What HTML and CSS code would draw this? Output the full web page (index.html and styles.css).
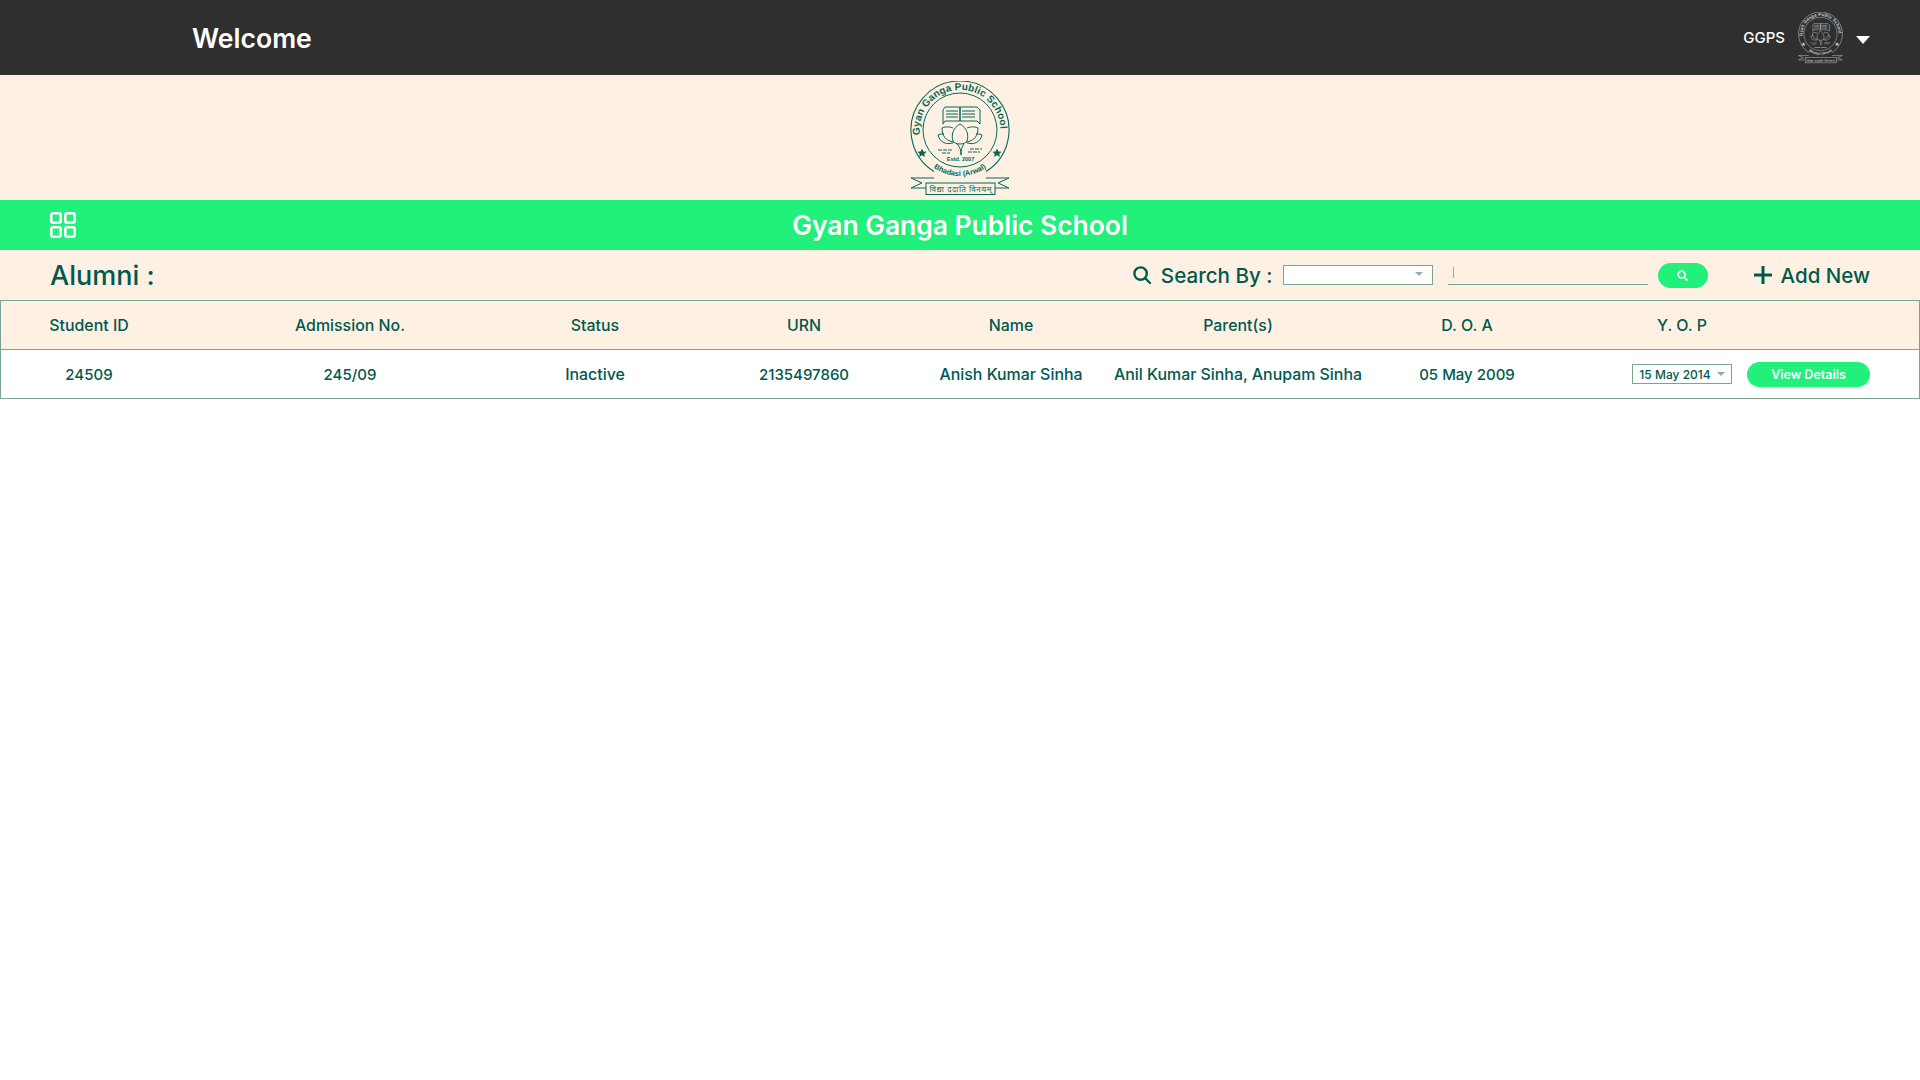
FILE: index.html
```html
<!DOCTYPE html>
<html lang="en">
<head>
<meta charset="utf-8">
<title>Alumni</title>
<link rel="stylesheet" href="styles.css">
</head>
<body>
<svg class="defs" width="0" height="0" aria-hidden="true">
  <defs>
    <path id="arcTop" d="M 10 55 A 40.4 40.4 0 1 1 90 55"/>
    <path id="arcBot" d="M 16 80 A 46 46 0 0 0 84 80"/>
    <symbol id="crest" viewBox="0 0 100 116">
      <g fill="none" stroke="currentColor" stroke-width="1">
        <path d="M 24 90.5 A 49 49 0 1 1 76 90.5" stroke-width="1.1"/>
        <circle cx="50" cy="49" r="37"/>
        <path d="M33 29 l2 -3 h15 v14 h-15 l-2 3z M50 26 h17 l3 3 v14 l-3 -3 h-17z M36 30 h12 M36 33 h12 M36 36 h12 M52 30 h13 M52 33 h13 M52 36 h13"/>
        <path d="M50 43 c-7 4 -9 11 -7 17 c2 4 12 4 14 0 c2 -6 0 -13 -7 -17z M43 47 c-5 -2 -9 -1 -11 0 c0 7 3 13 12 14 M57 47 c5 -2 9 -1 11 0 c0 7 -3 13 -12 14 M34 53 c-3 0 -5 0 -6 1 c2 7 7 10 15 8 M66 53 c3 0 5 0 6 1 c-2 7 -7 10 -15 8"/>
        <path d="M47 63 c3 3 4 6 4 11 M54 63 c-2 2 -3 6 -3 11"/>
        <path d="M28 69 h14 M32 72 h8 M60 68 h12 M58 71 h12" stroke-dasharray="4 1"/>
        <path d="M24 97 H1 L12 102 L1 107 H16 M76 97 H99 L88 102 L99 107 H85"/>
        <rect x="16" y="102" width="69" height="11.5" fill="var(--crest-fill)"/>
      </g>
      <g fill="currentColor" stroke="none" font-family="'Liberation Sans', sans-serif">
        <path d="M12 67.5 l1.4 3 3.2 .3 -2.4 2.1 .8 3.1 -3 -1.7 -3 1.7 .8 -3.1 -2.4 -2.1 3.2 -.3z"/>
        <path d="M87 67.5 l1.4 3 3.2 .3 -2.4 2.1 .8 3.1 -3 -1.7 -3 1.7 .8 -3.1 -2.4 -2.1 3.2 -.3z"/>
        <text font-size="10" font-weight="700"><textPath href="#arcTop" startOffset="1" textLength="130" lengthAdjust="spacing">Gyan Ganga Public School</textPath></text>
        <text font-size="5.6" font-weight="700" x="50.5" y="80" text-anchor="middle">Estd. 2007</text>
        <text font-size="7.4" font-weight="700"><textPath href="#arcBot" startOffset="50%" text-anchor="middle">Bhadasi (Arwal)</textPath></text>
        <text font-size="8" x="50.5" y="110.5" text-anchor="middle" textLength="62" font-family="'Noto Sans', 'DejaVu Sans', sans-serif">विद्या ददाति विनयम्</text>
      </g>
    </symbol>
  </defs>
</svg>

<header class="topbar">
  <h1 class="welcome">Welcome</h1>
  <div class="user">
    <span class="user-name">GGPS</span>
    <svg class="crest-small"><use href="#crest"/></svg>
    <span class="caret-white"></span>
  </div>
</header>

<div class="brand">
  <svg class="crest-large"><use href="#crest"/></svg>
</div>

<div class="school-bar">
  <svg class="grid-icon" viewBox="0 0 26 26" fill="none" stroke="#fff" stroke-width="2.6">
    <rect x="1.3" y="1.3" width="9.4" height="9.4" rx="2"/>
    <rect x="15.3" y="1.3" width="9.4" height="9.4" rx="2"/>
    <rect x="1.3" y="15.3" width="9.4" height="9.4" rx="2"/>
    <rect x="15.3" y="15.3" width="9.4" height="9.4" rx="2"/>
  </svg>
  <h2 class="school-name">Gyan Ganga Public School</h2>
</div>

<div class="toolbar">
  <h3 class="section-title">Alumni :</h3>
  <div class="tools">
    <svg class="search-icon" viewBox="0 0 18 18" fill="none" stroke="#00594f" stroke-width="2.4"><circle cx="7.6" cy="7.6" r="6.2"/><path d="M12 12 L17 17" stroke-linecap="round"/></svg>
    <span class="search-label">Search By :</span>
    <div class="select-box"><span class="caret-grey"></span></div>
    <div class="text-input"><span class="text-cursor"></span></div>
    <button class="search-btn" type="button">
      <svg viewBox="0 0 12 12" fill="none" stroke="#fff" stroke-width="1.7"><circle cx="5" cy="5" r="3.8"/><path d="M8 8 L11 11" stroke-linecap="round"/></svg>
    </button>
    <div class="add-new">
      <svg viewBox="0 0 20 20" fill="none" stroke="#00594f" stroke-width="3"><path d="M10 1 V19 M1 10 H19"/></svg>
      <span>Add New</span>
    </div>
  </div>
</div>

<section class="table">
  <div class="row head">
    <div class="c1">Student ID</div>
    <div>Admission No.</div>
    <div>Status</div>
    <div>URN</div>
    <div>Name</div>
    <div>Parent(s)</div>
    <div>D. O. A</div>
    <div class="c-yop">Y. O. P</div>
  </div>
  <div class="row body">
    <div class="c1 num">24509</div>
    <div class="num">245/09</div>
    <div>Inactive</div>
    <div class="num">2135497860</div>
    <div>Anish Kumar Sinha</div>
    <div>Anil Kumar Sinha, Anupam Sinha</div>
    <div class="num">05 May 2009</div>
    <div class="c-yop"><div class="date-select">15 May 2014<span class="caret-grey small"></span></div></div>
    <div class="c-action"><button class="view-btn" type="button">View Details</button></div>
  </div>
</section>
</body>
</html>
```

FILE: styles.css
```css
* { box-sizing: border-box; }
html, body { margin: 0; padding: 0; }
body {
  background: #fff;
  color: #00594f;
  font-family: Inter, "Open Sans", "Liberation Sans", sans-serif;
  min-height: 1080px;
}
h1, h2, h3 { margin: 0; font-weight: 600; }
.defs { display: block; width: 0; height: 0; }

.topbar {
  height: 75px;
  background: #2f2f2f;
  color: #fff;
  display: flex;
  align-items: center;
  justify-content: space-between;
  padding: 0 50px 0 192px;
}
.welcome { font-size: 26.6px; }
.user { display: flex; align-items: center; }
.user-name { font-size: 15px; font-weight: 500; }
.crest-small { width: 45px; height: 52px; color: #cfcfcf; --crest-fill: #2f2f2f; margin: 0 13px; }
.caret-white {
  width: 0; height: 0;
  border-left: 7.5px solid transparent;
  border-right: 7.5px solid transparent;
  border-top: 8px solid #fff;
  margin-top: 5px;
}

.brand {
  height: 125px;
  background: #fef1e3;
  display: flex;
  justify-content: center;
  padding-top: 6px;
}
.crest-large { width: 100px; height: 116px; color: #00695a; --crest-fill: #fef1e3; }

.school-bar {
  height: 50px;
  background: #21f07a;
  display: grid;
  grid-template-columns: 1fr auto 1fr;
  align-items: center;
  padding: 0 50px;
}
.grid-icon { width: 26px; height: 26px; }
.school-name { color: #fff; font-size: 26.4px; }

.toolbar {
  height: 50px;
  background: #fef1e3;
  display: flex;
  align-items: center;
  justify-content: space-between;
  padding: 0 50px;
}
.section-title { font-size: 27px; font-weight: 500; }
.tools { display: flex; align-items: center; }
.search-icon { width: 18px; height: 18px; margin-right: 10px; }
.search-label { font-size: 20.6px; font-weight: 500; margin-right: 10px; }
.select-box {
  width: 150px; height: 20px;
  background: #fff;
  border: 1px solid #7aa595;
  display: flex;
  align-items: center;
  justify-content: flex-end;
  padding: 0 9px 2px 0;
  margin-right: 15px;
}
.caret-grey {
  width: 0; height: 0;
  border-left: 4px solid transparent;
  border-right: 4px solid transparent;
  border-top: 4px solid #8fb0a3;
}
.caret-grey.small { margin-left: 6px; }
.text-input {
  width: 200px; height: 20px;
  border-bottom: 1px solid #7aa595;
  padding: 2px 0 0 5px;
  margin-right: 10px;
}
.text-cursor { display: block; width: 1px; height: 11px; background: #8fb0a3; }
.search-btn {
  width: 50px; height: 25px;
  border: 0;
  border-radius: 13px;
  background: #21f07a;
  padding: 0;
  display: flex;
  align-items: center;
  justify-content: center;
  margin-right: 45px;
}
.search-btn svg { width: 11px; height: 11px; }
.add-new { display: flex; align-items: center; gap: 8px; font-size: 20.5px; font-weight: 500; }
.add-new svg { width: 20px; height: 20px; }

.table { border: 1px solid #7aa595; }
.row {
  display: grid;
  grid-template-columns: 179px 340px 150px 268px 146px 308px 150px 90px 100px 15px 123px 1fr;
  align-items: center;
  text-align: center;
  font-size: 15.9px;
  font-weight: 500;
  white-space: nowrap;
}
.row.head { height: 49px; background: #fef1e3; border-bottom: 1px solid #7aa595; padding-top: 1px; }
.row.body { height: 48px; background: #fff; }
.num { font-size: 15px; }
.c1 { padding-right: 3px; }
.c-yop { grid-column: 9; }
.c-action { grid-column: 11; }
.date-select {
  height: 20px;
  border: 1px solid #7aa595;
  font-size: 12px;
  display: flex;
  align-items: center;
  justify-content: center;
}
.view-btn {
  width: 123px; height: 25px;
  border: 0;
  border-radius: 13px;
  background: #21f07a;
  color: #fff;
  font: 600 12.5px Inter, "Liberation Sans", sans-serif;
  padding: 0;
}
```
